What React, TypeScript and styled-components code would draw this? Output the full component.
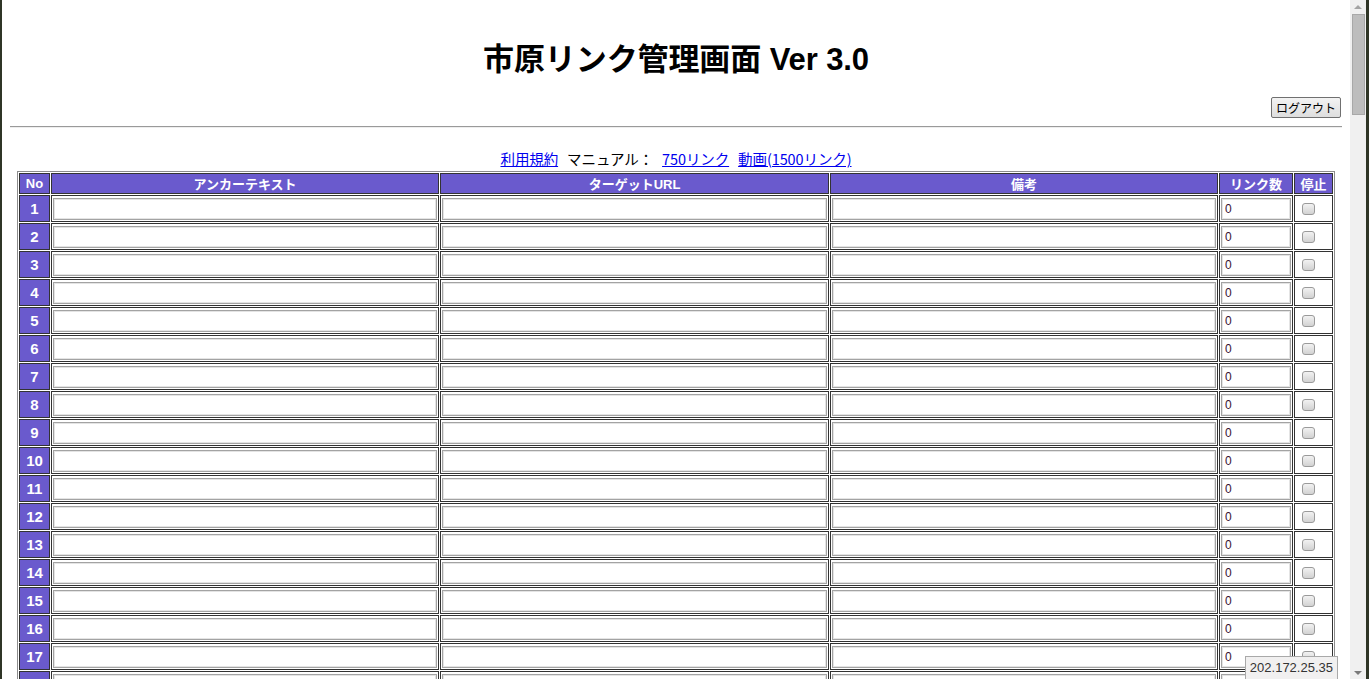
import React from "react";
import styled, { createGlobalStyle } from "styled-components";

const GlobalStyle = createGlobalStyle`
  html, body {
    margin: 0;
    padding: 0;
    background: #ffffff;
    overflow: hidden;
  }
  body {
    font-family: "Liberation Sans", "Noto Sans CJK JP", sans-serif;
  }
`;

const Frame = styled.div`
  display: flex;
  width: 1369px;
  height: 679px;
  overflow: hidden;
`;
const EdgeStrip = styled.div<{ w: number }>`
  flex: 0 0 ${(p) => p.w}px;
  background: #2f3526;
`;
const Viewport = styled.div`
  position: relative;
  flex: 1;
  padding: 0 8px;
  overflow: hidden;
  background: #ffffff;
`;
const Title = styled.h1`
  margin: 44px 0 0;
  text-align: center;
  font-family: "Liberation Sans", "Noto Sans CJK JP", sans-serif;
  font-size: 31px;
  font-weight: 700;
  line-height: 32px;
  letter-spacing: -0.1px;
  color: #000;
`;
const Toolbar = styled.div`
  display: flex;
  justify-content: flex-end;
  margin-top: 21px;
  padding-right: 1px;
`;
const LogoutButton = styled.button`
  height: 21px;
  padding: 0 4px;
  font-family: "Noto Sans CJK JP", sans-serif;
  font-size: 12px;
  line-height: 19px;
  color: #000;
  background: linear-gradient(#f3f3f3, #dedede);
  border: 1px solid #707070;
  border-radius: 2px;
`;
const Rule = styled.hr`
  margin: 8px 0 0;
  height: 0;
  border: none;
  border-top: 1px solid #9a9a9a;
  border-bottom: 1px solid #eeeeee;
`;
const LinkBar = styled.div`
  margin-top: 21px;
  text-align: center;
  font-family: "Noto Sans CJK JP", sans-serif;
  font-size: 14.5px;
  line-height: 20px;
  letter-spacing: -0.1px;
  color: #000;
  a {
    color: #0000ee;
    text-decoration: underline;
  }
`;
const Gap = styled.span`
  display: inline-block;
  width: 9px;
`;
const LinkTable = styled.table`
  width: 1317px;
  margin: 2px auto 0;
  table-layout: fixed;
  border-collapse: separate;
  border-spacing: 1px;
  border: 1px solid #8c8c8c;
`;
const HeadCell = styled.th<{ w: number }>`
  width: ${(p) => p.w - 2}px;
  height: 19px;
  padding: 0;
  background: #6a5acd;
  border: 1px solid #333;
  color: #fff;
  font-family: "Liberation Sans", "Noto Sans CJK JP", sans-serif;
  font-size: 13px;
  font-weight: 700;
  text-align: center;
  vertical-align: middle;
`;
const NumCell = styled.td`
  height: 25px;
  padding: 0;
  background: #6a5acd;
  border: 1px solid #333;
  color: #fff;
  font-family: "Liberation Sans", sans-serif;
  font-size: 15px;
  font-weight: 700;
  text-align: center;
  vertical-align: middle;
`;
const FieldCell = styled.td<{ inset?: number }>`
  height: 25px;
  padding: 0 1px 0 ${(p) => p.inset ?? 1}px;
  border: 1px solid #333;
  text-align: left;
  vertical-align: middle;
`;
const TextField = styled.input`
  display: block;
  box-sizing: border-box;
  width: 100%;
  height: 22px;
  margin: 0;
  padding: 0 3px;
  border: 1px solid #a3a3a3;
  box-shadow: inset 0 0 0 1px #e4e4e4;
  outline: none;
  font-family: "Liberation Sans", sans-serif;
  font-size: 12px;
  color: #3a1030;
  background: #fff;
`;
const Check = styled.input`
  appearance: none;
  display: block;
  width: 13px;
  height: 12px;
  margin: 1px 0 0;
  border: 1px solid #9a9a9a;
  border-radius: 3px;
  background: linear-gradient(#f2f2f2, #d2d2d2);
`;
const StatusTip = styled.div`
  position: absolute;
  right: 12px;
  bottom: -3px;
  height: 24px;
  padding: 0 4px;
  border: 1px solid #a9a9a9;
  background: #f1f0f0;
  font-family: "Liberation Sans", sans-serif;
  font-size: 13px;
  line-height: 22px;
  color: #333;
`;
const ScrollBar = styled.div`
  flex: 0 0 16px;
  display: flex;
  flex-direction: column;
  align-items: center;
  background: #f0f0f0;
`;
const Arrow = styled.div<{ down?: boolean }>`
  flex: 0 0 13px;
  display: flex;
  align-items: center;
  justify-content: center;
  &::after {
    content: "";
    border-left: 4px solid transparent;
    border-right: 4px solid transparent;
    ${(p) =>
      p.down ? "border-top: 4px solid #7a7a7a;" : "border-bottom: 4px solid #a3a3a3;"}
  }
`;
const Thumb = styled.div`
  width: 11px;
  height: 99px;
  margin-top: 1px;
  background: #bdbdbd;
  border: 1px solid #a8a8a8;
`;
const Track = styled.div`
  flex: 1;
`;

const columns = [
  { label: "No", w: 31 },
  { label: "アンカーテキスト", w: 388 },
  { label: "ターゲットURL", w: 389 },
  { label: "備考", w: 388 },
  { label: "リンク数", w: 74 },
  { label: "停止", w: 39 },
];

const rows = Array.from({ length: 18 }, (_, i) => i + 1);

export default function App() {
  return (
    <Frame>
      <GlobalStyle />
      <EdgeStrip w={2} />
      <Viewport>
        <Title>市原リンク管理画面 Ver 3.0</Title>
        <Toolbar>
          <LogoutButton>ログアウト</LogoutButton>
        </Toolbar>
        <Rule />
        <LinkBar>
          <a href="#">利用規約</a>
          <Gap />
          マニュアル：
          <Gap />
          <a href="#">750リンク</a>
          <Gap />
          <a href="#">動画(1500リンク)</a>
        </LinkBar>
        <LinkTable>
          <thead>
            <tr>
              {columns.map((c) => (
                <HeadCell key={c.label} w={c.w}>
                  {c.label}
                </HeadCell>
              ))}
            </tr>
          </thead>
          <tbody>
            {rows.map((n) => (
              <tr key={n}>
                <NumCell>{n}</NumCell>
                <FieldCell>
                  <TextField type="text" />
                </FieldCell>
                <FieldCell>
                  <TextField type="text" />
                </FieldCell>
                <FieldCell>
                  <TextField type="text" />
                </FieldCell>
                <FieldCell>
                  <TextField type="text" defaultValue="0" />
                </FieldCell>
                <FieldCell inset={7}>
                  <Check type="checkbox" />
                </FieldCell>
              </tr>
            ))}
          </tbody>
        </LinkTable>
        <StatusTip>202.172.25.35</StatusTip>
      </Viewport>
      <ScrollBar>
        <Arrow />
        <Thumb />
        <Track />
        <Arrow down />
      </ScrollBar>
      <EdgeStrip w={3} />
    </Frame>
  );
}
